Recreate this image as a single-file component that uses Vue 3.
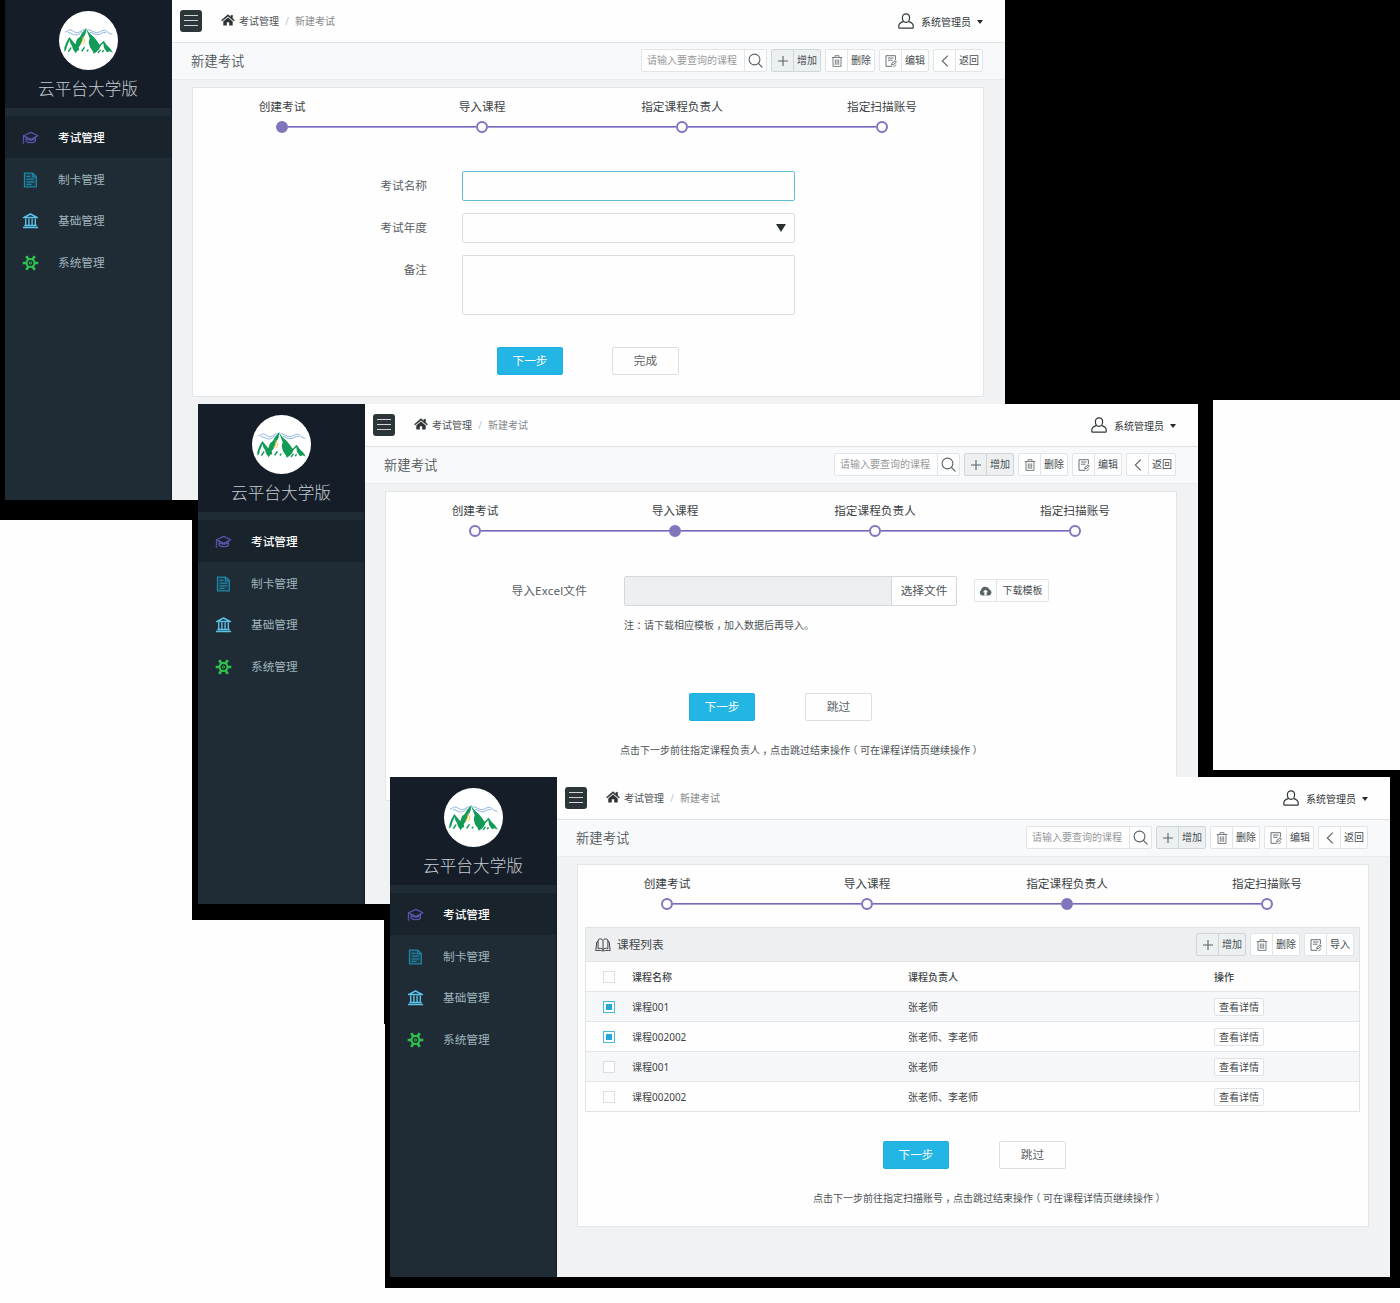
<script setup>
const menu = [
  { icon: 'cap', label: '考试管理', tone: 'violet' },
  { icon: 'doc', label: '制卡管理', tone: 'teal' },
  { icon: 'bank', label: '基础管理', tone: 'sky' },
  { icon: 'gear', label: '系统管理', tone: 'green' },
]

const tools = [
  { icon: 'plus', label: '增加', active: true },
  { icon: 'trash', label: '删除' },
  { icon: 'edit', label: '编辑' },
  { icon: 'back', label: '返回' },
]

const listTools = [
  { icon: 'plus', label: '增加', active: true },
  { icon: 'trash', label: '删除' },
  { icon: 'edit', label: '导入' },
]

const steps = ['创建考试', '导入课程', '指定课程负责人', '指定扫描账号']

const courses = [
  { name: '课程001', owner: '张老师', checked: true },
  { name: '课程002002', owner: '张老师、李老师', checked: true },
  { name: '课程001', owner: '张老师', checked: false },
  { name: '课程002002', owner: '张老师、李老师', checked: false },
]

const windows = [
  { id: 'create', step: 0 },
  { id: 'import', step: 1 },
  { id: 'assign', step: 2 },
]
</script>

<template>
  <div class="desktop">
    <svg class="sprite" aria-hidden="true">
      <symbol id="i-cap" viewBox="0 0 18 14">
        <g fill="none" stroke="currentColor" stroke-width="1.35" stroke-linejoin="round" stroke-linecap="round">
          <path d="M1.6 4.6 9.4 1l7.4 3.6-7.4 3.8z" />
          <path d="M4.4 6.2v4.3c1.5 2 8.3 2 9.8 0V6.2M5.6 7.9c2 1.3 5.4 1.3 7.4 0" />
          <path d="M1.6 4.8v5.4" />
        </g>
        <circle cx="1.5" cy="12" r="1" fill="currentColor" />
      </symbol>
      <symbol id="i-doc" viewBox="0 0 14 16">
        <g fill="none" stroke="currentColor" stroke-width="1.3">
          <path d="M1 1.2h8.2l3.6 3.4v10.2H1z" fill="currentColor" fill-opacity=".22" />
          <path d="M9 1.2v3.6h3.8M3 4.4h4M3 7.2h7.8M3 9.8h7.8M3 12.3h5" />
        </g>
      </symbol>
      <symbol id="i-bank" viewBox="0 0 16 16">
        <g fill="none" stroke="currentColor">
          <path d="M1 4.600 8 1l7 3.600z" stroke-width="1.500" stroke-linejoin="round" />
          <path d="M3.200 5.500v6.500M6.400 5.500v6.500M9.600 5.500v6.500M12.800 5.500v6.500" stroke-width="1.400" />
          <path d="M1.800 12.400h12.400M.4 14.500h15.200" stroke-width="1.500" />
        </g>
      </symbol>
      <symbol id="i-gear" viewBox="0 0 16 16">
        <g fill="none" stroke="currentColor">
          <circle cx="8" cy="8" r="4" stroke-width="2.100" />
          <circle cx="8" cy="8" r="1.100" stroke-width="1" />
          <path d="M12.200 8h3.600M.2 8h3.600M10.200 4.400l2-3.300M3.800 14.900l2-3.300M5.800 4.400l-2-3.300M12.200 14.900l-2-3.300" stroke-width="2.700" />
        </g>
      </symbol>
      <symbol id="i-home" viewBox="0 0 14 12">
        <path d="M7 .6 .4 6.200l.8.9L7 2.300l5.800 4.800.8-.9-2-1.700V1.300H9.900v1.800z" fill="currentColor" stroke="currentColor" stroke-width=".4" />
        <path d="M7 3.500 2.300 7.400v4.100H5.800V8.300h2.400v3.200h3.500V7.400z" fill="currentColor" />
      </symbol>
      <symbol id="i-user" viewBox="0 0 16 16">
        <g fill="none" stroke="currentColor" stroke-width="1.200" stroke-linejoin="round">
          <path d="M8 .8c2.200 0 3.600 1.600 3.600 4S10.200 9.300 8 9.300 4.400 7.200 4.400 4.800 5.800.8 8 .8z" />
          <path d="M5.300 8.700C2.200 9.500.8 10.900.8 13.200v1.200c0 .4.2.7.700.7h13c.5 0 .7-.3.7-.7v-1.200c0-2.300-1.400-3.700-4.500-4.500" />
        </g>
      </symbol>
      <symbol id="i-search" viewBox="0 0 15 15">
        <g fill="none" stroke="currentColor" stroke-width="1.100" stroke-linecap="round">
          <circle cx="6.500" cy="6.500" r="5.400" />
          <path d="m10.500 10.500 3.600 3.600" />
        </g>
      </symbol>
      <symbol id="i-plus" viewBox="0 0 12 12">
        <path d="M6 1v10M1 6h10" fill="none" stroke="currentColor" stroke-width="1.100" />
      </symbol>
      <symbol id="i-trash" viewBox="0 0 12 12">
        <g fill="none" stroke="currentColor" stroke-width=".8">
          <path d="M.8 2.500h10.400M4 2.300V.7h4v1.600M2 2.700v8.700h8V2.700M4.300 4.400v5.400M6 4.400v5.400M7.700 4.400v5.400" />
        </g>
      </symbol>
      <symbol id="i-edit" viewBox="0 0 12 12">
        <g fill="none" stroke="currentColor" stroke-width=".9">
          <path d="M10.400 5V.7H1v10.600h6.200M3 3h5.500M3 5.200h4.500" />
          <path d="m7 8.200 3.200-2.400 1.200 1.400-3.200 2.500-1.600.2zM8.500 11.400c1.300 0 2.200-.6 2.400-1.700" />
        </g>
      </symbol>
      <symbol id="i-back" viewBox="0 0 12 12">
        <path d="M8.800.7 3.300 6l5.500 5.300" fill="none" stroke="currentColor" stroke-width="1.100" />
      </symbol>
      <symbol id="i-cloud" viewBox="0 0 13 10">
        <path fill-rule="evenodd" d="M3.300 9.500A2.900 2.900 0 0 1 2 4.200 4.400 4.400 0 0 1 10.400 3.400a3.200 3.200 0 0 1-.3 6.100zM6.500 3.600 3.900 6.300h1.500v2.900h2.200V6.300h1.500z" fill="currentColor" />
      </symbol>
      <symbol id="i-book" viewBox="0 0 16 14">
        <g fill="none" stroke="currentColor" stroke-width="1" stroke-linejoin="round">
          <path d="M8 2.400C6.900.4 4.100.4 3.100 2v8.800c1.500-.9 3.900-.6 4.900.9 1-1.500 3.400-1.800 4.900-.9V2C11.900.4 9.100.4 8 2.400zM8 2.400v9.300" />
          <path d="M3 3.300 1.800 4 .8 12.700c2.200-.4 4.500-.4 6 .1h2.400c1.500-.5 3.800-.5 6-.1L14.200 4 13 3.300" />
        </g>
      </symbol>
      <symbol id="i-mount" viewBox="11 18 177 177">
        <circle cx="99.500" cy="106.500" r="88.500" fill="#fff" />
        <g fill="none" stroke="#8db4e2" stroke-linecap="round" stroke-linejoin="round">
          <path d="M30 81c7-1 10-8 17-6s10 9 19 8 13-9 21-9M98 74c9 0 16 8 25 9s17-9 25-7 11 11 22 12" stroke-width="3" />
          <path d="M39 83c9 0 13 7 22 7s13-6 18-9M104 82c10 1 14 9 24 7s13-9 23-6" stroke-width="3" />
        </g>
        <g fill="#119b56">
          <path d="M42 96 33 112 27 128v12l5-5 3-11 5-12 3-7 2 10 5 8 3 10 8 12 5-8 6-2-2-8 9-12 4-12 8-18 2-16-13 15-6 11-9 8-5 15z" />
          <path d="m91 69 11 15 14 13 9 11 10 14-4 11-9 9-7 4-3-8-8-11-4-15 3-12-5-14z" />
          <path d="m145 107 9 13 10 10 9 13-10-4-8 3-9-13-2-14-6 5-8 12-9 10 1-9 10-13z" />
          <path d="m37 139 9-13 3 3-8 12zM77 138l9-13 3 3-8 12zM93 138l5-6 2 4-4 5zM126 143l8-10 3 3-7 9zM139 139l5-5 2 4-4 5z" />
        </g>
        <path d="m84 94-3 14-5 10M89 101l-2 11-4 5" fill="none" stroke="#f2c94c" stroke-width="3" />
      </symbol>
    </svg>

    <div class="shade shade-top"></div>
    <div class="shade shade-left"></div>
    <div class="shade shade-mid"></div>
    <div class="shade shade-edge"></div>
    <div class="shade shade-low"></div>

    <section v-for="win in windows" :key="win.id" class="window" :class="win.id">
      <aside class="side">
        <div class="brand">
          <svg class="logo"><use href="#i-mount" /></svg>
          <div class="brand-name">云平台大学版</div>
        </div>
        <nav class="menu">
          <a v-for="(m, i) in menu" :key="m.icon" class="item" :class="{ on: i === 0 }">
            <svg class="item-icon" :class="[m.tone, m.icon]"><use :href="'#i-' + m.icon" /></svg>
            <span>{{ m.label }}</span>
          </a>
        </nav>
      </aside>

      <div class="main">
        <header class="top">
          <div class="burger"><i></i><i></i><i></i></div>
          <svg class="home"><use href="#i-home" /></svg>
          <span class="crumb">考试管理</span>
          <span class="slash">/</span>
          <span class="crumb here">新建考试</span>
          <div class="user">
            <svg class="user-icon"><use href="#i-user" /></svg>
            <span>系统管理员</span>
            <i class="caret"></i>
          </div>
        </header>

        <div class="bar">
          <h1>新建考试</h1>
          <div class="search">
            <span>请输入要查询的课程</span>
            <div class="search-btn"><svg><use href="#i-search" /></svg></div>
          </div>
          <div v-for="t in tools" :key="t.label" class="tool" :class="{ active: t.active }">
            <div class="tool-icon"><svg><use :href="'#i-' + t.icon" /></svg></div>
            <span>{{ t.label }}</span>
          </div>
        </div>

        <div class="card">
          <ol class="steps">
            <li v-for="(s, i) in steps" :key="s" :class="{ current: i === win.step }">
              <span>{{ s }}</span>
              <i class="dot"></i>
            </li>
          </ol>

          <template v-if="win.id === 'create'">
            <div class="form">
              <label>考试名称</label>
              <div class="field focus"></div>
              <label>考试年度</label>
              <div class="field select"><i></i></div>
              <label>备注</label>
              <div class="field area"></div>
            </div>
            <div class="actions">
              <button class="primary">下一步</button>
              <button>完成</button>
            </div>
          </template>

          <template v-else-if="win.id === 'import'">
            <div class="upload">
              <label>导入Excel文件</label>
              <div class="file"><div class="file-name"></div><div class="file-btn">选择文件</div></div>
              <div class="tool download">
                <div class="tool-icon"><svg><use href="#i-cloud" /></svg></div>
                <span>下载模板</span>
              </div>
            </div>
            <p class="note">注<b>：</b>请下载相应模板<b>，</b>加入数据后再导入。</p>
            <div class="actions">
              <button class="primary">下一步</button>
              <button>跳过</button>
            </div>
            <p class="hint">点击下一步前往指定课程负责人<b>，</b>点击跳过结束操作<b>（</b>可在课程详情页继续操作<b>）</b></p>
          </template>

          <template v-else>
            <div class="list">
              <div class="list-head">
                <svg class="book"><use href="#i-book" /></svg>
                <h2>课程列表</h2>
                <div v-for="t in listTools" :key="t.label" class="tool" :class="{ active: t.active }">
                  <div class="tool-icon"><svg><use :href="'#i-' + t.icon" /></svg></div>
                  <span>{{ t.label }}</span>
                </div>
              </div>
              <div class="row th">
                <i class="check"></i><span>课程名称</span><span>课程负责人</span><span>操作</span>
              </div>
              <div v-for="(c, i) in courses" :key="i" class="row" :class="{ odd: i % 2 === 0 }">
                <i class="check" :class="{ checked: c.checked }"></i>
                <span>{{ c.name }}</span>
                <span>{{ c.owner }}</span>
                <a class="detail">查看详情</a>
              </div>
            </div>
            <div class="actions">
              <button class="primary">下一步</button>
              <button>跳过</button>
            </div>
            <p class="hint">点击下一步前往指定扫描账号<b>，</b>点击跳过结束操作<b>（</b>可在课程详情页继续操作<b>）</b></p>
          </template>
        </div>
      </div>
    </section>
  </div>
</template>

<style>
body {
  margin: 0;
  background: #fff;
}
</style>

<style scoped>
* {
  box-sizing: border-box;
}
.desktop {
  position: relative;
  width: 1400px;
  height: 1303px;
  overflow: hidden;
  background: #fefefe;
  font-family: "Noto Sans", "Noto Sans CJK SC", sans-serif;
  font-size: 10px;
  line-height: 16px;
  color: #4c5256;
}
.sprite {
  position: absolute;
  width: 0;
  height: 0;
}
.shade {
  position: absolute;
  background: #000;
}
.shade-top { left: 0; top: 0; width: 1400px; height: 400px; }
.shade-left { left: 0; top: 400px; width: 198px; height: 120px; }
.shade-mid { left: 192px; top: 400px; width: 1021px; height: 520px; }
.shade-edge { left: 384px; top: 920px; width: 1px; height: 104px; }
.shade-low { left: 385px; top: 770px; width: 1015px; height: 518px; }

.window {
  position: absolute;
  display: flex;
  width: 1000px;
  height: 500px;
  overflow: hidden;
  background: #f0f2f4;
}
.create { left: 5px; top: 0; }
.import { left: 198px; top: 404px; }
.assign { left: 390px; top: 777px; }

/* sidebar */
.side {
  flex: none;
  width: 167px;
  background: #1f2b35;
  border-right: 1px solid #141d26;
}
.brand {
  display: flex;
  flex-direction: column;
  align-items: center;
  height: 108px;
  padding-top: 11px;
  background: #151e28;
}
.logo {
  width: 59px;
  height: 59px;
}
.brand-name {
  margin-top: 7px;
  font-size: 16.67px;
  line-height: 24px;
  font-weight: 300;
  color: #c6ccd2;
}
.menu {
  padding-top: 8px;
}
.item {
  display: flex;
  align-items: center;
  height: 41.7px;
  padding: 2.2px 0 0 17px;
  font-size: 11.67px;
  color: #9fb5bc;
}
.item.on {
  background: #18232c;
  color: #fff;
  font-weight: 500;
}
.item-icon {
  width: 17px;
  height: 16px;
  margin-right: 19px;
}
.item-icon.cap { height: 14px; }
.violet { color: #5c53ad; }
.teal { color: #1f86a8; }
.sky { color: #5cc4e8; }
.green { color: #2fc44e; }

/* header */
.main {
  flex: 1;
  display: flex;
  flex-direction: column;
  min-width: 0;
}
.top {
  display: flex;
  align-items: center;
  height: 43px;
  padding: 0 22px 1px 8px;
  background: #fefefe;
  border-bottom: 1px solid #dfe2e5;
}
.burger {
  display: flex;
  flex-direction: column;
  justify-content: center;
  gap: 4px;
  width: 22px;
  height: 22px;
  padding: 0 4px;
  background: #2c3639;
  border-radius: 3px;
}
.burger i {
  height: 1px;
  background: #cfd5d6;
}
.home {
  width: 14px;
  height: 12px;
  margin: 0 4px 1px 19px;
  color: #2d3235;
}
.slash {
  width: 16px;
  text-align: center;
  color: #c2c6c9;
}
.here {
  color: #85898c;
}
.user {
  display: flex;
  align-items: center;
  margin-left: auto;
  padding-top: 2px;
  color: #33383b;
}
.user-icon {
  width: 16px;
  height: 16px;
  margin: 0 7px 1px 0;
}
.caret {
  margin-left: 6px;
  border: 3.5px solid transparent;
  border-top: 4px solid #25292b;
  border-bottom: 0;
}

/* title bar */
.bar {
  display: flex;
  align-items: center;
  gap: 4px;
  height: 37px;
  padding: 0 22px 1px 19px;
  background: #f8f9fb;
  border-bottom: 1px solid #e9ebee;
}
h1 {
  margin: 0 auto 0 0;
  font-size: 13.33px;
  line-height: 20px;
  font-weight: 350;
  color: #4f565a;
}
.search,
.tool {
  display: flex;
  width: 50px;
  height: 23px;
  background: #fefefe;
  border: 1px solid #e2e5e7;
  border-radius: 2px;
  line-height: 21px;
}
.search {
  width: 126px;
  color: #96999b;
}
.search > span {
  width: 102px;
  padding-left: 5px;
}
.search-btn,
.tool-icon {
  display: flex;
  align-items: center;
  justify-content: center;
  flex: 1;
  border-left: 1px solid #e2e5e7;
  color: #5a6266;
}
.search-btn svg {
  width: 15px;
  height: 15px;
}
.tool-icon {
  flex: none;
  width: 22px;
  border-left: 0;
  border-right: 1px solid #e2e5e7;
}
.tool-icon svg {
  width: 12px;
  height: 12px;
}
.tool > span {
  flex: 1;
  text-align: center;
  white-space: nowrap;
  color: #454b4f;
}
.tool.active {
  background: #edf0f1;
  border-color: #cfd6d9;
}
.tool.active .tool-icon {
  border-color: #cfd6d9;
}

/* card */
.card {
  width: 792px;
  height: 310px;
  margin: 7px 0 0 20px;
  background: #fefefe;
  border: 1px solid #e3e6e9;
}
.assign .card {
  height: 363px;
}
.steps {
  display: flex;
  width: 800px;
  height: 48px;
  margin: 0 -10px 0 -11px;
  padding: 11px 0 0;
  list-style: none;
  font-size: 11.67px;
  color: #3d4246;
}
.steps li {
  position: relative;
  display: flex;
  flex-direction: column;
  align-items: center;
  flex: none;
  width: 200px;
}
.dot {
  width: 12px;
  height: 12px;
  margin-top: 6px;
  background: #fefefe;
  border: 2px solid #8075be;
  border-radius: 50%;
  z-index: 1;
}
.current .dot {
  background: #8176bb;
}
.steps li + li::before {
  content: "";
  position: absolute;
  top: 27px;
  left: -94px;
  width: 188px;
  height: 2px;
  background: linear-gradient(#7468b8 50%, #a9a0da 50%);
}
.form {
  display: grid;
  grid-template-columns: 234px 333px;
  column-gap: 35px;
  row-gap: 12px;
  padding-top: 35px;
}
label {
  text-align: right;
  font-size: 11.67px;
  line-height: 30px;
  color: #5a6064;
}
.field {
  height: 30px;
  border: 1px solid #d8dde1;
  border-radius: 2px;
}
.focus {
  border-color: #5fbfda;
}
.select {
  display: flex;
  align-items: center;
  justify-content: flex-end;
  padding-right: 8px;
}
.select i {
  border: 5px solid transparent;
  border-top: 8px solid #2b3033;
  border-bottom: 0;
}
.area {
  height: 60px;
}
.actions {
  display: flex;
  gap: 49px;
  margin: 32px 0 0 304px;
}
button {
  width: 67px;
  height: 28px;
  padding: 0;
  background: #fefefe;
  border: 1px solid #dadfe3;
  border-radius: 2px;
  font-family: inherit;
  font-size: 11.67px;
  line-height: 26px;
  color: #5c6266;
}
button.primary {
  width: 66px;
  background: #23b5e4;
  border-color: #1eaee0;
  color: #fff;
}
.upload {
  display: flex;
  align-items: center;
  padding-top: 36px;
}
.upload label {
  width: 201px;
  margin: 0 37px 0 0;
  padding-bottom: 1px;
  line-height: 29px;
  letter-spacing: .15px;
}
.file {
  display: flex;
  width: 333px;
  height: 30px;
  border: 1px solid #d3d8dc;
  border-radius: 2px;
  font-size: 11.67px;
  line-height: 28px;
  text-align: center;
}
.file-name {
  width: 266px;
  background: #eeeff1;
}
.file-btn {
  flex: 1;
  border-left: 1px solid #d3d8dc;
}
.download {
  width: 75px;
  margin: 0 0 1px 17px;
}
.download .tool-icon svg {
  width: 13px;
  height: 10px;
}
p {
  margin: 0;
  white-space: nowrap;
}
/* full-width punctuation centred in its cell */
p b {
  padding: 0 2.5px;
  font-family: "Noto Sans CJK SC", sans-serif;
  font-weight: 400;
  font-feature-settings: "halt";
}
.note {
  margin: 11px 0 0 238px;
}
.import .actions {
  gap: 50px;
  margin: 60px 0 0 303px;
}
.hint {
  margin: 21px 0 0 234px;
}

/* course list */
.list {
  width: 775px;
  margin: 14px 0 0 7px;
  border: 1px solid #dfe3e6;
  color: #3e4447;
}
.list-head {
  display: flex;
  align-items: center;
  gap: 4px;
  height: 34px;
  padding: 0 5px 0 9px;
  background: #eeeff1;
  border-bottom: 1px solid #e0e4e7;
}
.book {
  width: 16px;
  height: 14px;
  margin-right: 2px;
}
h2 {
  margin: 0 auto 0 0;
  font-size: 11.67px;
  line-height: 16px;
  font-weight: 400;
}
.row {
  display: grid;
  grid-template-columns: 46px 276px 306px 1fr;
  align-items: center;
  height: 30px;
  border-bottom: 1px solid #e3e6e9;
}
.row:last-child {
  height: 29px;
  border-bottom: 0;
}
.row.odd {
  background: #f6f7f9;
}
.th {
  font-weight: 500;
}
.check {
  width: 12px;
  height: 12px;
  margin-left: 17px;
  background: #fefefe;
  border: 1px solid #dadee2;
}
.checked {
  padding: 2px;
  border-color: #43b9dc;
  background: #23a9d8 content-box;
  box-shadow: inset 0 0 0 2px #fefefe;
}
.detail {
  width: 50px;
  height: 18px;
  background: #fefefe;
  border: 1px solid #e0e3e6;
  border-radius: 2px;
  line-height: 16px;
  text-align: center;
}
.assign .actions {
  gap: 50px;
  margin: 29px 0 0 305px;
}
.assign .hint {
  margin-left: 235px;
}
</style>
